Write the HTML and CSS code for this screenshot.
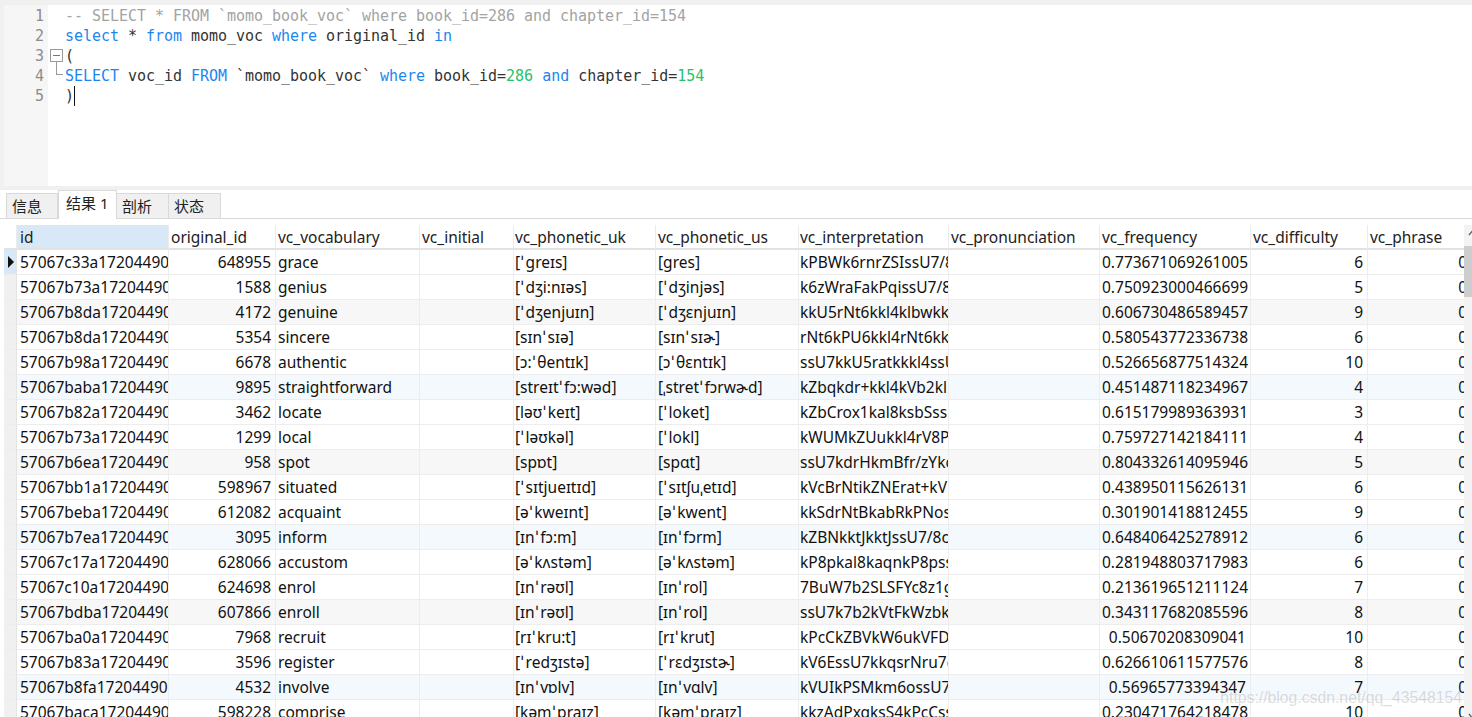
FILE: index.html
```html
<!DOCTYPE html>
<html lang="zh">
<head>
<meta charset="utf-8">
<title>SQL query result</title>
<link rel="stylesheet" href="styles.css">
</head>
<body>
<section class="editor">
  <div class="gutter">
    <div>1</div><div>2</div><div>3</div><div>4</div><div>5</div>
  </div>
  <div class="fold">
    <span class="fold-box"></span>
    <span class="fold-line"></span>
  </div>
  <pre class="code"><span class="c">-- SELECT * FROM `momo_book_voc` where book_id=286 and chapter_id=154</span>
<span class="k">select</span> * <span class="k">from</span> momo_voc <span class="k">where</span> original_id <span class="k">in</span>
(
<span class="k">SELECT</span> voc_id <span class="k">FROM</span> `momo_book_voc` <span class="k">where</span> book_id=<span class="n">286</span> <span class="k">and</span> chapter_id=<span class="n">154</span>
)<span class="caret"></span></pre>
</section>
<nav class="tabs">
  <span class="tab">信息</span>
  <span class="tab active">结果 1</span>
  <span class="tab">剖析</span>
  <span class="tab">状态</span>
</nav>
<section class="results">
  <div class="grid-clip">
    <table class="grid">
      <colgroup>
        <col class="c0"><col class="c1"><col class="c2"><col class="c3"><col class="c4"><col class="c5"><col class="c6"><col class="c7"><col class="c8"><col class="c9"><col class="c10"><col class="c11">
      </colgroup>
      <thead>
        <tr><th class="rh"></th><th class="sel">id</th><th>original_id</th><th>vc_vocabulary</th><th>vc_initial</th><th>vc_phonetic_uk</th><th>vc_phonetic_us</th><th>vc_interpretation</th><th>vc_pronunciation</th><th>vc_frequency</th><th>vc_difficulty</th><th>vc_phrase</th></tr>
      </thead>
      <tbody>
        <tr><td class="rh cur"><span class="tri"></span></td><td><div>57067c33a172044907</div></td><td class="r">648955</td><td>grace</td><td></td><td><div>[<i>ˈ</i>greɪs]</div></td><td><div>[gres]</div></td><td><div>kPBWk6rnrZSIssU7/8</div></td><td></td><td class="r">0.773671069261005</td><td class="r">6</td><td class="r">0</td></tr>
        <tr><td class="rh"></td><td><div>57067b73a172044907</div></td><td class="r">1588</td><td>genius</td><td></td><td><div>[<i>ˈ</i>dʒi:nɪəs]</div></td><td><div>[<i>ˈ</i>dʒinjəs]</div></td><td><div>k6zWraFakPqissU7/8</div></td><td></td><td class="r">0.750923000466699</td><td class="r">5</td><td class="r">0</td></tr>
        <tr class="g"><td class="rh"></td><td><div>57067b8da172044907</div></td><td class="r">4172</td><td>genuine</td><td></td><td><div>[<i>ˈ</i>dʒenjuɪn]</div></td><td><div>[<i>ˈ</i>dʒɛnjuɪn]</div></td><td><div>kkU5rNt6kkl4klbwkk</div></td><td></td><td class="r">0.606730486589457</td><td class="r">9</td><td class="r">0</td></tr>
        <tr><td class="rh"></td><td><div>57067b8da172044907</div></td><td class="r">5354</td><td>sincere</td><td></td><td><div>[sɪn<i>ˈ</i>sɪə]</div></td><td><div>[sɪn<i>ˈ</i>sɪɚ]</div></td><td><div>rNt6kPU6kkl4rNt6kk</div></td><td></td><td class="r">0.580543772336738</td><td class="r">6</td><td class="r">0</td></tr>
        <tr><td class="rh"></td><td><div>57067b98a172044907</div></td><td class="r">6678</td><td>authentic</td><td></td><td><div>[ɔ:<i>ˈ</i>θentɪk]</div></td><td><div>[ɔ<i>ˈ</i>θɛntɪk]</div></td><td><div>ssU7kkU5ratkkkl4ssU</div></td><td></td><td class="r">0.526656877514324</td><td class="r">10</td><td class="r">0</td></tr>
        <tr class="b"><td class="rh"></td><td><div>57067baba172044907</div></td><td class="r">9895</td><td>straightforward</td><td></td><td><div>[streɪt<i>ˈ</i>fɔ:wəd]</div></td><td><div>[ˌstret<i>ˈ</i>fɔrwɚd]</div></td><td><div>kZbqkdr+kkl4kVb2kl</div></td><td></td><td class="r">0.451487118234967</td><td class="r">4</td><td class="r">0</td></tr>
        <tr><td class="rh"></td><td><div>57067b82a172044907</div></td><td class="r">3462</td><td>locate</td><td></td><td><div>[ləʊ<i>ˈ</i>keɪt]</div></td><td><div>[<i>ˈ</i>loket]</div></td><td><div>kZbCrox1kal8ksbSss</div></td><td></td><td class="r">0.615179989363931</td><td class="r">3</td><td class="r">0</td></tr>
        <tr><td class="rh"></td><td><div>57067b73a172044907</div></td><td class="r">1299</td><td>local</td><td></td><td><div>[<i>ˈ</i>ləʊkəl]</div></td><td><div>[<i>ˈ</i>lokl]</div></td><td><div>kWUMkZUukkl4rV8P</div></td><td></td><td class="r">0.759727142184111</td><td class="r">4</td><td class="r">0</td></tr>
        <tr class="g"><td class="rh"></td><td><div>57067b6ea172044907</div></td><td class="r">958</td><td>spot</td><td></td><td><div>[spɒt]</div></td><td><div>[spɑt]</div></td><td><div>ssU7kdrHkmBfr/zYkc</div></td><td></td><td class="r">0.804332614095946</td><td class="r">5</td><td class="r">0</td></tr>
        <tr><td class="rh"></td><td><div>57067bb1a172044907</div></td><td class="r">598967</td><td>situated</td><td></td><td><div>[<i>ˈ</i>sɪtjueɪtɪd]</div></td><td><div>[<i>ˈ</i>sɪtʃuˌetɪd]</div></td><td><div>kVcBrNtikZNErat+kV</div></td><td></td><td class="r">0.438950115626131</td><td class="r">6</td><td class="r">0</td></tr>
        <tr><td class="rh"></td><td><div>57067beba172044907</div></td><td class="r">612082</td><td>acquaint</td><td></td><td><div>[ə<i>ˈ</i>kweɪnt]</div></td><td><div>[ə<i>ˈ</i>kwent]</div></td><td><div>kkSdrNtBkabRkPNos</div></td><td></td><td class="r">0.301901418812455</td><td class="r">9</td><td class="r">0</td></tr>
        <tr class="b"><td class="rh"></td><td><div>57067b7ea172044907</div></td><td class="r">3095</td><td>inform</td><td></td><td><div>[ɪn<i>ˈ</i>fɔ:m]</div></td><td><div>[ɪn<i>ˈ</i>fɔrm]</div></td><td><div>kZBNkktJkktJssU7/8c</div></td><td></td><td class="r">0.648406425278912</td><td class="r">6</td><td class="r">0</td></tr>
        <tr><td class="rh"></td><td><div>57067c17a172044907</div></td><td class="r">628066</td><td>accustom</td><td></td><td><div>[ə<i>ˈ</i>kʌstəm]</div></td><td><div>[ə<i>ˈ</i>kʌstəm]</div></td><td><div>kP8pkal8kaqnkP8pss</div></td><td></td><td class="r">0.281948803717983</td><td class="r">6</td><td class="r">0</td></tr>
        <tr><td class="rh"></td><td><div>57067c10a172044907</div></td><td class="r">624698</td><td>enrol</td><td></td><td><div>[ɪn<i>ˈ</i>rəʊl]</div></td><td><div>[ɪn<i>ˈ</i>rol]</div></td><td><div>7BuW7b2SLSFYc8z1g</div></td><td></td><td class="r">0.213619651211124</td><td class="r">7</td><td class="r">0</td></tr>
        <tr class="g"><td class="rh"></td><td><div>57067bdba172044907</div></td><td class="r">607866</td><td>enroll</td><td></td><td><div>[ɪn<i>ˈ</i>rəʊl]</div></td><td><div>[ɪn<i>ˈ</i>rol]</div></td><td><div>ssU7k7b2kVtFkWzbk</div></td><td></td><td class="r">0.343117682085596</td><td class="r">8</td><td class="r">0</td></tr>
        <tr><td class="rh"></td><td><div>57067ba0a172044907</div></td><td class="r">7968</td><td>recruit</td><td></td><td><div>[rɪ<i>ˈ</i>kru:t]</div></td><td><div>[rɪ<i>ˈ</i>krut]</div></td><td><div>kPcCkZBVkW6ukVFD</div></td><td></td><td class="r">0.50670208309041</td><td class="r">10</td><td class="r">0</td></tr>
        <tr><td class="rh"></td><td><div>57067b83a172044907</div></td><td class="r">3596</td><td>register</td><td></td><td><div>[<i>ˈ</i>redʒɪstə]</div></td><td><div>[<i>ˈ</i>rɛdʒɪstɚ]</div></td><td><div>kV6EssU7kkqsrNru7c</div></td><td></td><td class="r">0.626610611577576</td><td class="r">8</td><td class="r">0</td></tr>
        <tr class="b"><td class="rh"></td><td><div>57067b8fa172044907</div></td><td class="r">4532</td><td>involve</td><td></td><td><div>[ɪn<i>ˈ</i>vɒlv]</div></td><td><div>[ɪn<i>ˈ</i>vɑlv]</div></td><td><div>kVUIkPSMkm6ossU7</div></td><td></td><td class="r">0.56965773394347</td><td class="r">7</td><td class="r">0</td></tr>
        <tr><td class="rh"></td><td><div>57067baca172044907</div></td><td class="r">598228</td><td>comprise</td><td></td><td><div>[kəm<i>ˈ</i>praɪz]</div></td><td><div>[kəm<i>ˈ</i>praɪz]</div></td><td><div>kkzAdPxqksS4kPcCss</div></td><td></td><td class="r">0.230471764218478</td><td class="r">10</td><td class="r">0</td></tr>
      </tbody>
    </table>
  </div>
  <div class="scrollbar">
    <svg class="arrow" width="8" height="6" viewBox="0 0 8 6"><path d="M1 5 4 1.5 7 5" fill="none" stroke="#606060" stroke-width="1.4"/></svg>
    <div class="thumb"></div>
    <svg class="arrow down" width="8" height="6" viewBox="0 0 8 6"><path d="M1 1 4 4.5 7 1" fill="none" stroke="#606060" stroke-width="1.4"/></svg>
  </div>
  <span class="watermark">https://blog.csdn.net/qq_43548154</span>
</section>
</body>
</html>
```
FILE: styles.css
```css
* { box-sizing: border-box; }
html, body { margin: 0; height: 100%; }
body {
  width: 1472px;
  height: 717px;
  overflow: hidden;
  background: #fff;
  display: flex;
  flex-direction: column;
  font-family: "Noto Sans", "Noto Sans CJK SC", sans-serif;
  color: #111;
}
.editor {
  height: 190px;
  flex: none;
  display: flex;
  background: #fff;
  border-top: 5px solid #f0f0f0;
  border-left: 4px solid #f0f0f0;
  border-bottom: 4px solid #f0f0f0;
}
.gutter {
  width: 44px;
  flex: none;
  background: #f6f6f6;
  padding: 1px 4px 0 0;
  text-align: right;
  font: 15px/20px "DejaVu Sans Mono", monospace;
  color: #8c8c8c;
}
.fold {
  width: 17px;
  flex: none;
  position: relative;
}
.fold-box {
  position: absolute;
  left: 2px;
  top: 44px;
  width: 13px;
  height: 13px;
  border: 1px solid #9a9a9a;
}
.fold-box::after {
  content: "";
  position: absolute;
  left: 2px;
  right: 2px;
  top: 5px;
  height: 1px;
  background: #777;
}
.fold-line {
  position: absolute;
  left: 8px;
  top: 57px;
  width: 7px;
  height: 13px;
  border-left: 1px solid #9a9a9a;
  border-bottom: 1px solid #9a9a9a;
}
.code {
  margin: 0;
  padding-top: 1px;
  font: 15px/20px "DejaVu Sans Mono", "Liberation Mono", monospace;
  letter-spacing: -0.03px;
  color: #333;
}
.c { color: #a3a3a3; }
.k { color: #1c86ee; }
.n { color: #1fc46b; }
.caret {
  display: inline-block;
  width: 1px;
  height: 20px;
  background: #111;
  vertical-align: -5px;
}
.tabs {
  flex: none;
  height: 29px;
  padding-left: 6px;
  display: flex;
  align-items: flex-end;
  border-bottom: 1px solid #d9d9d9;
  font-size: 15px;
  background: #fff;
}
.tab {
  width: 52px;
  height: 25px;
  background: #f0f0f0;
  border: 1px solid #d9d9d9;
  border-bottom: 0;
  border-left-width: 0;
  padding-left: 5px;
  line-height: 25px;
  color: #222;
}
.tab:first-child { border-left-width: 1px; }
.tab.active {
  width: 59px;
  height: 29px;
  margin-bottom: -1px;
  background: #fff;
  border-left-width: 1px;
  padding-left: 7px;
  line-height: 25px;
}
.results {
  flex: 1;
  min-height: 0;
  display: flex;
  position: relative;
  padding-top: 6px;
  padding-left: 4px;
}
.grid-clip {
  width: 1460px;
  flex: none;
  overflow: hidden;
}
.grid {
  table-layout: fixed;
  width: 1468px;
  border-collapse: separate;
  border-spacing: 0;
  font-size: 15.5px;
  line-height: 20px;
}
.c0 { width: 13px; }
.c1 { width: 152px; }
.c2 { width: 107px; }
.c3 { width: 144px; }
.c4 { width: 94px; }
.c5 { width: 142px; }
.c6 { width: 143px; }
.c7 { width: 150px; }
.c8 { width: 151px; }
.c9 { width: 151px; }
.c10 { width: 117px; }
.c11 { width: 104px; }
th {
  height: 25px;
  padding: 1px 2px 0;
  font-weight: 400;
  text-align: left;
  white-space: nowrap;
  overflow: hidden;
  color: #222;
  border-right: 1px solid #ebebeb;
  border-bottom: 2px solid #e2e2e2;
}
th.sel { background: #d8e8f6; padding-left: 3px; }
th.rh { background: #fff; }
th:nth-child(6), th:nth-child(8) { padding-left: 1px; }
td {
  height: 25px;
  padding: 0 4px 1px 2px;
  white-space: nowrap;
  overflow: hidden;
  border-right: 1px solid #ededed;
  border-bottom: 1px solid #ededed;
}
td:nth-child(2) { padding-left: 3px; }
td:nth-child(6), td:nth-child(8) { padding-left: 1px; }
td > div { overflow: hidden; margin-right: -4px; }
td i { font-style: normal; letter-spacing: 2px; margin-left: 1px; }
td.r { text-align: right; }
td.rh { background: #f0f0f0; padding: 0; border-right-color: #e4e4e4; }
td.rh.cur { background: #d8e8f6; }
.tri {
  display: block;
  width: 0;
  height: 0;
  margin-left: 4px;
  border-left: 6px solid #111;
  border-top: 6px solid transparent;
  border-bottom: 6px solid transparent;
}
tr.g td:not(.rh) { background: #f7f7f7; }
tr.b td:not(.rh) { background: #f4f9fd; }
.scrollbar {
  width: 16px;
  flex: none;
  background: #f3f3f3;
  display: flex;
  flex-direction: column;
  align-items: center;
  padding-top: 5px;
}
.thumb {
  width: 100%;
  height: 51px;
  margin-top: 10px;
  background: #cdcdcd;
}
.arrow.down { margin-top: auto; margin-bottom: -2px; }
.watermark {
  position: absolute;
  right: 10px;
  bottom: 9px;
  font: 15.75px/20px "Liberation Sans", sans-serif;
  color: rgba(140, 140, 140, 0.3);
}
```
